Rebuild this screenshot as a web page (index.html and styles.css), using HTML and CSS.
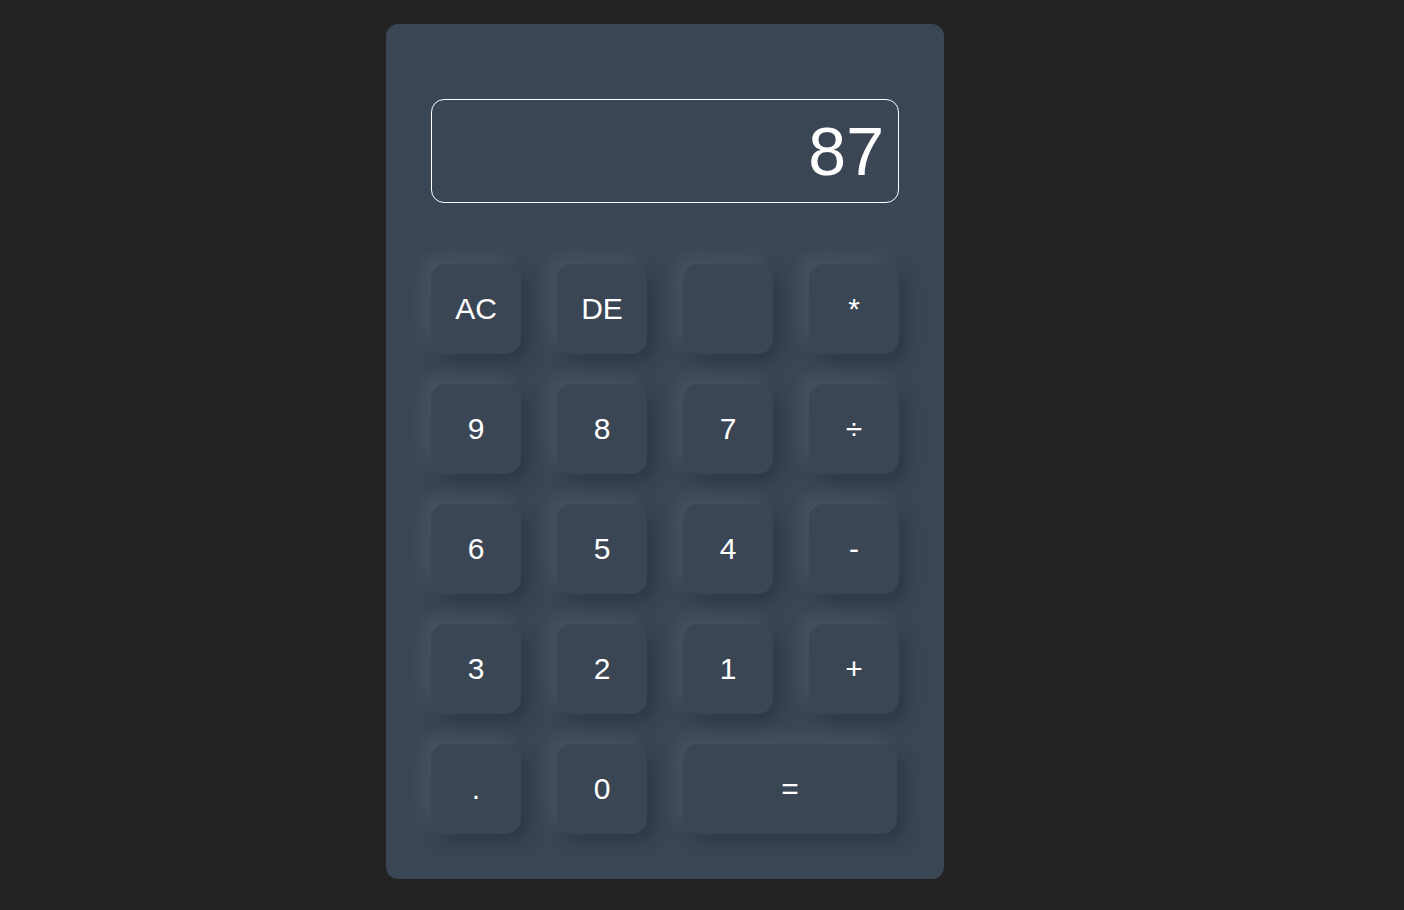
FILE: index.html
```html
<!DOCTYPE html>
<html>
<head>
<meta charset="utf-8">
<link rel="stylesheet" href="styles.css">
</head>
<body>
<div class="calc">
  <div class="display">87</div>
  <div class="keys">
    <button class="key">AC</button>
    <button class="key">DE</button>
    <button class="key"></button>
    <button class="key key-star">*</button>
    <button class="key">9</button>
    <button class="key">8</button>
    <button class="key">7</button>
    <button class="key">÷</button>
    <button class="key">6</button>
    <button class="key">5</button>
    <button class="key">4</button>
    <button class="key">-</button>
    <button class="key">3</button>
    <button class="key">2</button>
    <button class="key">1</button>
    <button class="key">+</button>
    <button class="key">.</button>
    <button class="key">0</button>
    <button class="key key-eq">=</button>
  </div>
</div>
</body>
</html>
```
FILE: styles.css
```css
* { box-sizing: border-box; }
html, body { margin: 0; padding: 0; }
body {
  background: #222222;
  font-family: "Liberation Sans", Arial, sans-serif;
  display: flex;
  justify-content: flex-start;
  padding: 24px 0 0 386px;
  min-height: 910px;
}
.calc {
  width: 558px;
  height: 855px;
  background: #3b4655;
  border-radius: 12px;
  padding: 75px 45px 45px;
}
.display {
  height: 104px;
  border: 1px solid #ffffff;
  border-radius: 13px;
  color: #ffffff;
  font-size: 68px;
  text-align: right;
  padding: 0 14px 0 0;
  line-height: 102px;
}
.keys {
  margin-top: 61px;
  display: grid;
  grid-template-columns: repeat(4, 90px);
  grid-auto-rows: 90px;
  column-gap: 36px;
  row-gap: 30px;
}
.key {
  border: none;
  background: #3b4655;
  border-radius: 15px;
  color: #ffffff;
  font-family: "Liberation Sans", Arial, sans-serif;
  font-size: 30px;
  padding: 0;
  box-shadow: -8px -8px 18px rgba(255, 255, 255, 0.07), 8px 8px 18px rgba(0, 0, 0, 0.22);
}
.key-eq {
  grid-column: span 2;
  width: 214px;
}
```
